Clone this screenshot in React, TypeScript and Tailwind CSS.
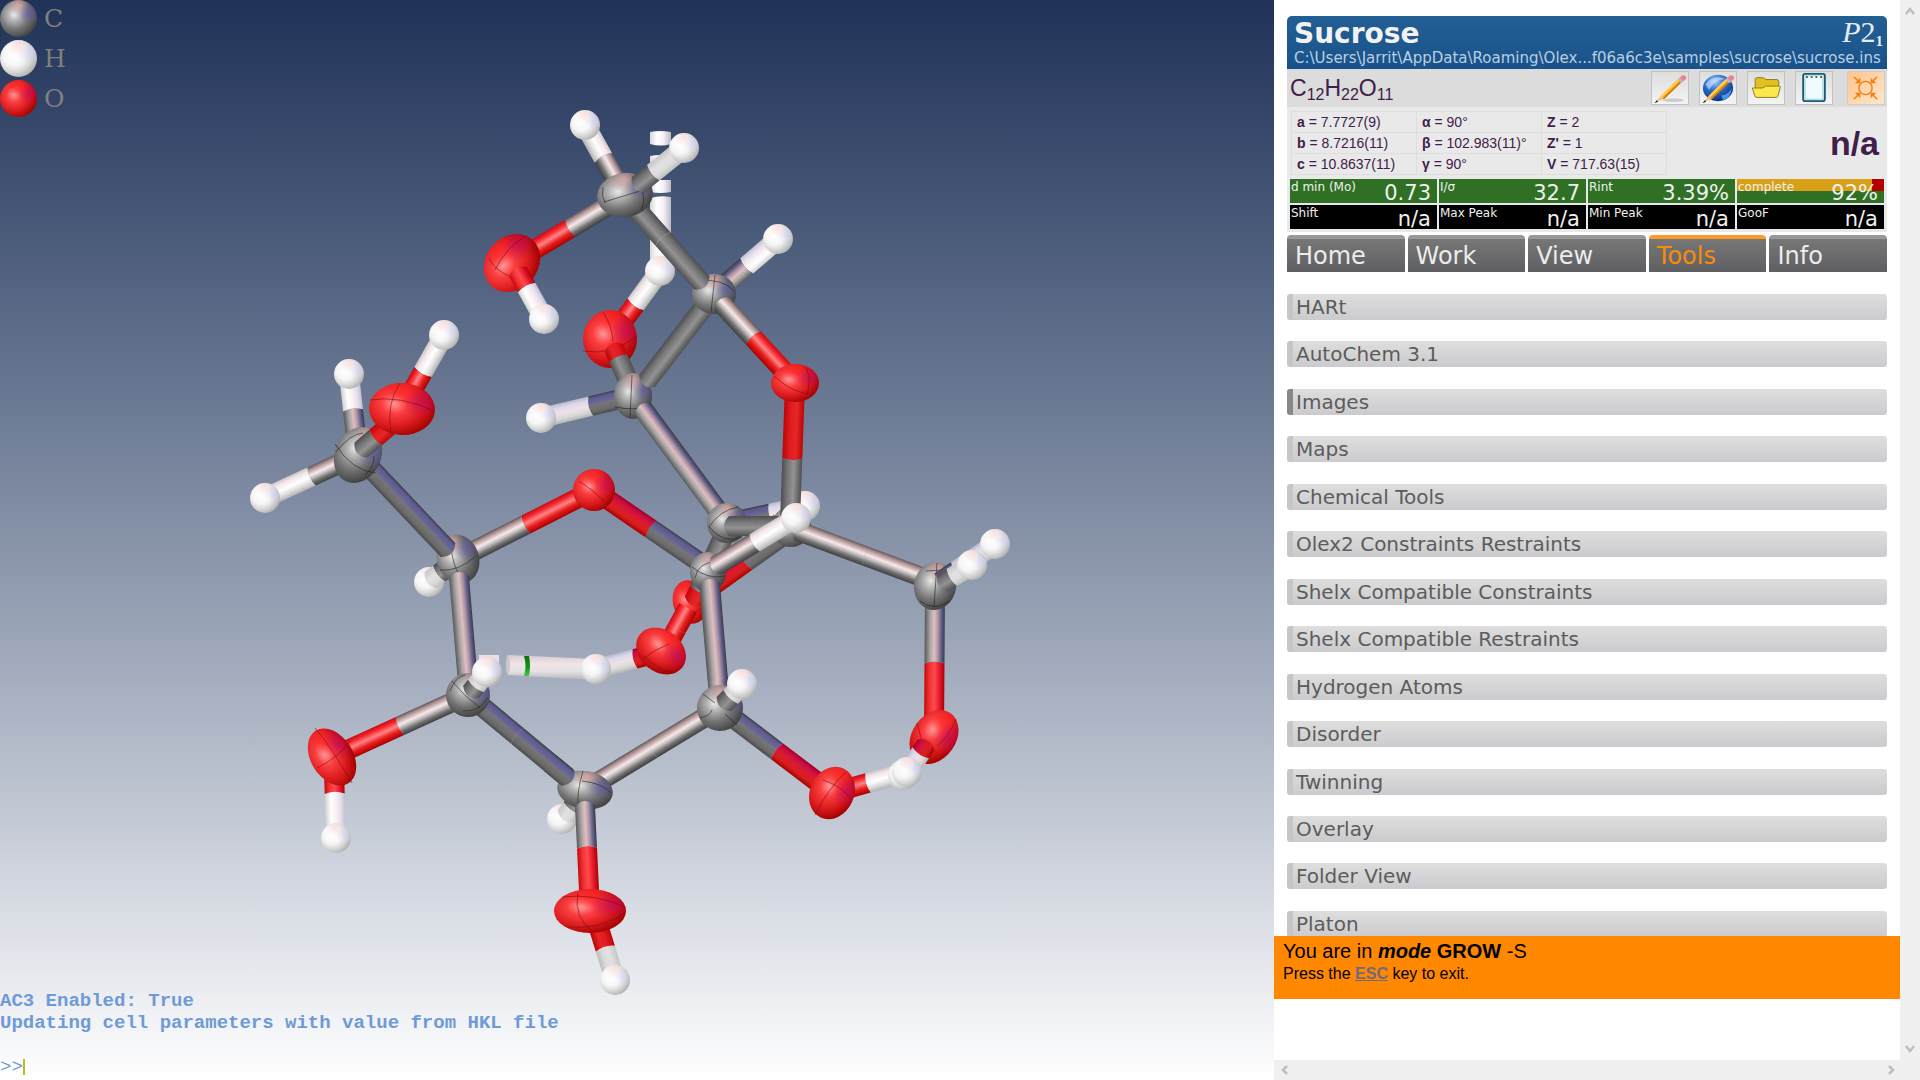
import React from "react";

type Element = "C" | "H" | "O";
type Light = "lit" | "blue" | "vert" | "flat";

type Atom = {
  kind: "atom";
  el: Element;
  x: number;
  y: number;
  rx: number;
  ry: number;
  rot: number;
  marks?: string;
};

type Bond = {
  kind: "bond";
  from: [number, number];
  split: number;
  to: [number, number];
  a: Element;
  b: Element;
  light: Light;
  cap?: "start" | "end";
};

type Raw = { kind: "raw"; node: React.ReactNode };

const atom = (el: Element, x: number, y: number, rx = 15, ry = 15, rot = 0, marks?: string): Atom => ({
  kind: "atom", el, x, y, rx, ry, rot, marks,
});

const bond = (
  x1: number, y1: number, x2: number, y2: number,
  a: Element, b: Element, split: number, light: Light, cap?: "start" | "end",
): Bond => ({ kind: "bond", from: [x1, y1], to: [x2, y2], a, b, split, light, cap });

const RAMPS: Record<string, [number, string][]> = {
  "C-lit": [[0, "#5a5557"], [0.14, "#a98b8c"], [0.42, "#f8e9ea"], [0.58, "#c4bdbd"], [0.78, "#707070"], [1, "#3d3d3d"]],
  "C-blue": [[0, "#3c3c46"], [0.14, "#5e5c8c"], [0.34, "#66639a"], [0.5, "#757578"], [0.8, "#6a6a6a"], [1, "#4a4a4a"]],
  "C-vert": [[0, "#3a3a42"], [0.18, "#66628f"], [0.34, "#b096a4"], [0.52, "#dfbfc0"], [0.72, "#aca6a6"], [0.9, "#757575"], [1, "#585858"]],
  "C-flat": [[0, "#4e4e50"], [0.3, "#77777a"], [0.6, "#939393"], [0.85, "#686868"], [1, "#505050"]],
  "O-lit": [[0, "#c80a10"], [0.2, "#f5252d"], [0.45, "#ff8585"], [0.7, "#e9201f"], [1, "#a80000"]],
  "O-blue": [[0, "#a4001c"], [0.2, "#c60d4a"], [0.45, "#dc1a2c"], [0.75, "#d71e20"], [1, "#a80000"]],
  "O-vert": [[0, "#ab0000"], [0.25, "#e51b30"], [0.5, "#ff4a4c"], [0.75, "#f03034"], [1, "#c40a0a"]],
  "O-flat": [[0, "#bd0505"], [0.35, "#e01c20"], [0.65, "#e62626"], [1, "#bb0505"]],
  "H-lit": [[0, "#c9c6c8"], [0.2, "#f3e6e8"], [0.5, "#ffffff"], [0.75, "#dedede"], [1, "#b0b0b0"]],
  "H-blue": [[0, "#b8b8c8"], [0.22, "#dcd8ee"], [0.5, "#f0e2e6"], [0.78, "#d6d6d8"], [1, "#b2b2b2"]],
  "H-vert": [[0, "#c2c0c8"], [0.22, "#e4def2"], [0.45, "#fbeff1"], [0.7, "#ffffff"], [1, "#cfcfcf"]],
  "H-flat": [[0, "#c6c6c6"], [0.4, "#e2e2e2"], [0.7, "#dcdcdc"], [1, "#bdbdbd"]],
};

const SCENE: (Atom | Bond | Raw)[] = [
  {
    kind: "raw",
    node: (
      <g fill="url(#hcol)">
        <path d="M650 132q10-2 21 0v12q-10 3-21 0z" />
        <path d="M650 156q10-2 21 0v12q-10 3-21 0z" />
        <path d="M650 180h21v12q-10 2-21 0z" />
        <path d="M650 193h21v3h-21z" fill="#4b5d75" />
        <path d="M650 198q10-3 21-1v68h-21z" />
      </g>
    ),
  },
  bond(610, 339, 660, 271, "O", "H", 0.51, "lit"),
  atom("H", 660, 271),
  bond(624, 195, 585, 125, "C", "H", 0.53, "lit"),
  atom("H", 585, 125),
  bond(626, 195, 512, 263, "C", "O", 0.49, "lit"),
  bond(714, 294, 778, 239, "C", "H", 0.51, "vert"),
  atom("H", 778, 239),
  bond(541, 418, 633, 396, "H", "C", 0.54, "blue"),
  atom("H", 541, 418),
  atom("O", 610, 339, 27, 29, 0, "M603 312Q612 325 613 342M583 351Q612 356 637 336"),
  bond(614, 348, 632, 390, "O", "C", 0.24, "flat", "start"),
  atom("C", 633, 396, 19, 23, 0, "M632 375L630 418M615 407Q634 411 652 406"),
  bond(647, 381, 714, 294, "C", "C", 0.5, "flat", "start"),
  atom("C", 714, 294, 22, 20, 0, "M715 275L711 312M700 281Q722 278 734 291"),
  bond(624, 195, 702, 283, "C", "C", 0.5, "flat", "end"),
  atom("C", 625, 195, 28, 22, -8, "M604 202L640 191M603 187Q601 196 605 203M642 191Q646 201 641 210"),
  bond(638, 185, 684, 148, "C", "H", 0.33, "flat", "start"),
  atom("H", 684, 148),
  atom("O", 512, 263, 31, 26, -50, "M489 258Q494 270 511 277M495 270Q505 249 524 237"),
  bond(518, 272, 544, 319, "O", "H", 0.33, "vert", "start"),
  atom("H", 544, 319),
  bond(722, 304, 795, 383, "C", "O", 0.43, "lit", "start"),

  bond(727, 523, 805, 506, "C", "H", 0.56, "blue"),
  atom("H", 805, 506),
  bond(690, 602, 791, 530, "O", "C", 0.56, "blue"),
  atom("C", 791, 527, 20, 20, 0, "M773 515Q790 525 809 540"),
  bond(795, 383, 790, 522, "O", "C", 0.54, "flat"),
  atom("O", 795, 383, 24, 19, 0, "M774 376Q790 391 808 394M806 368Q812 380 807 394"),
  bond(798, 531, 935, 582, "C", "C", 0.5, "lit", "start"),
  bond(643, 409, 727, 523, "C", "C", 0.5, "vert", "start"),
  atom("O", 690, 602, 17, 22, -15, "M676 611Q690 618 704 606"),
  bond(725, 533, 694, 601, "C", "O", 0.84, "flat", "end"),
  atom("C", 727, 523, 20, 20, 0, "M709 527Q720 510 738 507M709 527Q724 545 742 537"),
  bond(729, 526, 785, 526, "C", "C", 0.5, "flat", "start"),
  bond(688, 608, 666, 648, "O", "O", 0.5, "lit"),
  bond(596, 669, 661, 652, "H", "O", 0.6, "blue"),
  atom("O", 661, 651, 27, 21, 38, "M643 659Q655 649 669 644M644 656Q658 670 674 673"),
  {
    kind: "raw",
    node: (
      <g>
        <path d="M479 655h20v8h-20z" fill="#ece0e3" />
        <path d="M508 655L594 659V680L508 675q-3-10 0-20z" fill="url(#hrow)" />
        <ellipse cx="508" cy="665" rx="2" ry="10" fill="#c9c9cc" />
        <path d="M524 656h5q2 9 0 20h-5q3-10 0-20z" fill="url(#green)" />
      </g>
    ),
  },
  atom("H", 596, 669),

  bond(349, 374, 358, 455, "H", "C", 0.45, "vert"),
  atom("H", 349, 374),
  bond(265, 498, 358, 455, "H", "C", 0.5, "lit"),
  atom("H", 265, 498),
  bond(402, 409, 444, 335, "O", "H", 0.5, "lit"),
  atom("H", 444, 335),
  bond(458, 559, 594, 490, "C", "O", 0.5, "lit"),
  bond(594, 490, 708, 568, "O", "C", 0.5, "blue"),
  atom("O", 594, 490, 21, 21, 0, "M579 481Q592 489 604 501"),
  atom("H", 429, 582),
  bond(431, 580, 458, 559, "H", "C", 0.3, "flat", "start"),
  atom("C", 458, 559, 21, 25, -20, "M450 540Q452 562 458 573M440 570Q458 572 476 556"),
  bond(358, 455, 448, 550, "C", "C", 0.5, "blue", "end"),
  atom("C", 358, 455, 23, 29, 25, "M335 444Q352 471 376 473M336 452Q350 434 363 433M374 456Q374 468 365 475"),
  bond(361, 450, 402, 415, "C", "O", 0.36, "flat", "start"),
  atom("O", 402, 409, 33, 26, 3, "M370 400Q400 395 434 411M400 383Q386 403 391 434"),

  bond(459, 577, 469, 695, "C", "C", 0.5, "vert", "start"),
  bond(332, 757, 468, 695, "O", "C", 0.5, "lit"),
  bond(334, 770, 336, 838, "O", "H", 0.35, "vert"),
  atom("H", 336, 838),
  atom("O", 332, 757, 21, 31, -32, "M315 728Q330 745 352 783M317 768Q338 758 350 741"),
  bond(468, 695, 567, 777, "C", "C", 0.5, "blue"),
  atom("C", 468, 695, 22, 22, 20, "M452 681Q463 695 480 708M450 691Q455 677 465 675M463 711Q480 712 488 697"),
  bond(471, 692, 487, 672, "C", "H", 0.3, "flat", "start"),
  atom("H", 487, 672),
  atom("H", 562, 819),
  bond(566, 816, 585, 790, "H", "C", 0.3, "flat", "start"),
  bond(585, 790, 720, 708, "C", "C", 0.5, "lit"),
  atom("C", 585, 790, 28, 19, 10, "M583 771Q577 790 578 806M582 781Q602 783 611 793"),
  bond(550, 763, 568, 778, "C", "C", 0.5, "blue", "end"),
  bond(585, 806, 590, 911, "C", "O", 0.4, "vert", "start"),
  bond(598, 925, 615, 980, "O", "H", 0.43, "flat"),
  atom("H", 615, 980),
  atom("O", 590, 911, 36, 22, 0, "M578 893Q573 917 593 932M562 897Q595 893 625 907M567 927Q600 930 625 913"),

  bond(720, 708, 832, 793, "C", "O", 0.51, "blue"),
  bond(832, 793, 907, 772, "O", "H", 0.48, "lit"),
  atom("O", 832, 793, 22, 27, 25, "M815 815Q827 790 845 773M823 780Q842 786 851 799"),
  bond(708, 570, 720, 708, "C", "C", 0.5, "vert"),
  atom("C", 720, 708, 23, 23, 0, "M703 694L715 703M700 718Q710 716 712 710M725 714L737 725"),
  bond(724, 704, 743, 684, "C", "H", 0.35, "flat", "start"),
  atom("H", 742, 684),
  atom("C", 708, 572, 18, 20, 0, "M692 567Q708 580 724 576M695 578Q698 562 716 562"),
  bond(710, 584, 718, 680, "C", "C", 0.5, "vert", "start"),
  bond(716, 566, 796, 518, "C", "H", 0.48, "lit", "start"),
  atom("H", 796, 518),

  bond(935, 586, 934, 735, "C", "O", 0.52, "vert"),
  atom("C", 935, 586, 21, 24, 10, "M937 563L934 607M920 601Q935 612 949 601M926 571L944 570"),
  bond(940, 582, 995, 544, "C", "H", 0.3, "blue"),
  atom("H", 995, 544),
  bond(943, 583, 972, 565, "C", "H", 0.3, "flat", "start"),
  atom("H", 972, 565),
  atom("H", 903, 775),
  atom("O", 934, 737, 22, 29, 35, "M917 723L922 741M937 746Q948 738 956 719"),
  bond(926, 745, 905, 776, "O", "H", 0.25, "blue", "start"),
  atom("H", 907, 772),
];

function BondShape({ item }: { item: Bond }) {
  const reversed = item.to[0] < item.from[0] - 1;
  const [p, q] = reversed ? [item.to, item.from] : [item.from, item.to];
  const a = reversed ? item.b : item.a;
  const b = reversed ? item.a : item.b;
  const split = reversed ? 1 - item.split : item.split;
  const cap = item.cap && reversed ? (item.cap === "start" ? "end" : "start") : item.cap;
  const length = Math.hypot(q[0] - p[0], q[1] - p[1]);
  const angle = (Math.atan2(q[1] - p[1], q[0] - p[0]) * 180) / Math.PI;
  const mid = length * split;
  const left = cap === "start" ? `M0 -10Q-10 0 0 10` : `M0 -10L0 10`;
  const right = cap === "end" ? `Q${length + 10} 0 ${length} -10` : `L${length} -10`;
  const seam = `Q${mid - 4} 0 ${mid} -10`;
  return (
    <g transform={`translate(${p[0]} ${p[1]}) rotate(${angle})`}>
      <path d={`M${mid} -10Q${mid - 4} 0 ${mid} 10L${length} 10${right}Z`} fill={`url(#${b}-${item.light})`} />
      <path d={`${left}L${mid} 10${seam}Z`} fill={`url(#${a}-${item.light})`} />
    </g>
  );
}

function AtomShape({ item }: { item: Atom }) {
  return (
    <g>
      <g transform={`translate(${item.x} ${item.y}) rotate(${item.rot})`}>
        <ellipse rx={item.rx} ry={item.ry} fill={`url(#ball-${item.el})`} />
        <ellipse rx={item.rx} ry={item.ry} fill={`url(#warm-${item.el})`} />
        <ellipse rx={item.rx} ry={item.ry} fill={`url(#cool-${item.el})`} />
      </g>
      {item.marks && (
        <path d={item.marks} fill="none" stroke={item.el === "O" ? "#7d0c10" : "#222"} strokeWidth="1" opacity="0.6" />
      )}
    </g>
  );
}

const BALLS: Record<Element, [number, string][]> = {
  C: [[0, "#eaeaea"], [0.25, "#b4b4b4"], [0.6, "#747474"], [1, "#404040"]],
  H: [[0, "#ffffff"], [0.45, "#f6f6f6"], [0.75, "#d2d2d2"], [1, "#adadad"]],
  O: [[0, "#ff9a9a"], [0.3, "#fb3f41"], [0.65, "#dc1c1e"], [1, "#a20000"]],
};
const WARM: Record<Element, string> = { C: "#eab0b0", H: "#ffd8d8", O: "#ff2424" };
const COOL: Record<Element, string> = { C: "#5c58a8", H: "#cfcff6", O: "#c00a62" };
const ELEMENTS: Element[] = ["C", "H", "O"];

function Gradients() {
  return (
    <defs>
      {Object.entries(RAMPS).map(([id, stops]) => (
        <linearGradient key={id} id={id} gradientUnits="userSpaceOnUse" x1="0" y1="-10" x2="0" y2="10">
          {stops.map(([o, c]) => <stop key={o} offset={o} stopColor={c} />)}
        </linearGradient>
      ))}
      {ELEMENTS.map((el) => (
        <React.Fragment key={el}>
          <radialGradient id={`ball-${el}`} cx="0.38" cy="0.4" r="0.66">
            {BALLS[el].map(([o, c]) => <stop key={o} offset={o} stopColor={c} />)}
          </radialGradient>
          <radialGradient id={`warm-${el}`} cx="0.5" cy="0.14" r="0.3">
            <stop offset="0" stopColor={WARM[el]} stopOpacity="0.7" />
            <stop offset="1" stopColor={WARM[el]} stopOpacity="0" />
          </radialGradient>
          <radialGradient id={`cool-${el}`} cx="0.8" cy="0.36" r="0.3">
            <stop offset="0" stopColor={COOL[el]} stopOpacity="0.65" />
            <stop offset="1" stopColor={COOL[el]} stopOpacity="0" />
          </radialGradient>
        </React.Fragment>
      ))}
      <linearGradient id="hcol" x1="0" x2="1">
        <stop offset="0" stopColor="#d8d8dc" /><stop offset="0.35" stopColor="#fff" />
        <stop offset="0.65" stopColor="#f6eef6" /><stop offset="1" stopColor="#b9b9c4" />
      </linearGradient>
      <linearGradient id="hrow" x1="0" y1="0" x2="0" y2="1">
        <stop offset="0" stopColor="#d4cdd0" /><stop offset="0.35" stopColor="#f2e3e6" />
        <stop offset="0.65" stopColor="#e4e2e4" /><stop offset="1" stopColor="#b4b4b6" />
      </linearGradient>
      <linearGradient id="green" x1="0" y1="0" x2="0" y2="1">
        <stop offset="0" stopColor="#0a6e10" /><stop offset="0.6" stopColor="#129a1a" /><stop offset="1" stopColor="#4fc04f" />
      </linearGradient>
    </defs>
  );
}

function Molecule() {
  return (
    <svg
      viewBox="0 0 1274 1080"
      preserveAspectRatio="xMidYMid slice"
      className="h-full w-full min-h-0 [grid-area:1/1]"
      role="img"
      aria-label="Sucrose molecule"
    >
      <Gradients />
      {SCENE.map((item, i) =>
        item.kind === "atom" ? <AtomShape key={i} item={item} />
          : item.kind === "bond" ? <BondShape key={i} item={item} />
          : <g key={i}>{item.node}</g>,
      )}
    </svg>
  );
}

function Viewport() {
  return (
    <main className="grid min-w-0 flex-1 grid-cols-1 grid-rows-1 overflow-hidden bg-linear-to-b from-[#203257] to-white">
      <Molecule />
      <div className="z-10 flex flex-col justify-between pb-0.5 [grid-area:1/1]">
        <ul className="flex flex-col gap-[3px]">
          {ELEMENTS.map((el) => (
            <li key={el} className="flex h-[37px] items-center gap-[7px] font-['DejaVu_Serif',serif] text-[25px] leading-none text-[#808080]">
              <svg viewBox="-18 -18 36 36" className="size-[37px]">
                <AtomShape item={atom(el, 0, 0, 18, 18)} />
              </svg>
              {el}
            </li>
          ))}
        </ul>
        <div className="font-['Liberation_Mono',monospace] text-[19px] leading-[22px] text-[#6f9ad8]">
          <p className="font-bold">AC3 Enabled: True</p>
          <p className="font-bold">Updating cell parameters with value from HKL file</p>
          <label className="mt-[22px] flex items-center">
            <span>&gt;&gt;</span>
            <span className="h-4 w-0.5 bg-[#c0bc10]" />
            <input aria-label="Command line" className="min-w-0 flex-1 bg-transparent outline-none" />
          </label>
        </div>
      </div>
    </main>
  );
}

function Pencil() {
  return (
    <g>
      <path d="M8.500 25.500L27.500 7l3.500 3.500L12 29z" fill="#f7a51c" />
      <path d="M8.500 25.500L27.500 7l1.500 1.500L10 27z" fill="#ffd35a" />
      <path d="M11 28L30 9.500l1 1L12 29z" fill="#cf7508" />
      <path d="M8.500 25.500L3 32l9-3z" fill="#e8c48e" />
      <path d="M4.500 30L2 33l4-1.500z" fill="#222" />
      <path d="M26.500 8l2-2 4 4-2 2z" fill="#b9bcc4" />
      <path d="M28.500 6l3-2.500q3-.5 4 1.500t-.5 3L32.500 10z" fill="#ea8490" />
    </g>
  );
}

const toolIcons: { label: string; art: React.ReactNode }[] = [
  {
    label: "Edit",
    art: (
      <>
        <ellipse cx="22" cy="30" rx="11" ry="2" fill="#ccc" />
        <Pencil />
      </>
    ),
  },
  {
    label: "Edit in browser",
    art: (
      <>
        <defs>
          <radialGradient id="globe" cx="0.4" cy="0.25" r="0.8">
            <stop offset="0" stopColor="#a9cdf6" /><stop offset="0.4" stopColor="#2f74d0" /><stop offset="1" stopColor="#062a78" />
          </radialGradient>
        </defs>
        <ellipse cx="18.500" cy="17" rx="16" ry="14" fill="url(#globe)" />
        <path d="M5 13Q14 2 28 8Q16 6 9 19Z" fill="#d3e6fb" opacity="0.6" />
        <path d="M22 25Q30 24 33 17Q32 28 24 30Z" fill="#3f97ee" />
        <Pencil />
      </>
    ),
  },
  {
    label: "Open folder",
    art: (
      <>
        <path d="M7 26V8q0-2 2-2h6q2 0 3 2h12q2 0 2 2v7z" fill="#e2c01e" stroke="#8a7a20" />
        <path d="M4 17h11l3-2h15q1 0 .5 2L31 26q-.5 1-2 1H9q-2 0-2.500-2z" fill="#fce74c" stroke="#8a7a20" />
      </>
    ),
  },
  {
    label: "Notepad",
    art: (
      <>
        <rect x="7" y="2" width="23" height="29" rx="2" fill="#f1fafc" stroke="#185a70" strokeWidth="2" />
        <rect x="9" y="4" width="19" height="25" fill="none" stroke="#8ed0e2" strokeWidth="1" />
        <path d="M10 5.500h17" stroke="#555" strokeWidth="2" strokeDasharray="2 3" />
      </>
    ),
  },
];

function HeaderIcons() {
  return (
    <div className="flex items-center">
      <div className="mr-3.5 flex gap-2.5">
        {toolIcons.map((t) => (
          <button key={t.label} aria-label={t.label} className="h-[34px] w-[38px] border border-[#c2c2c2] bg-linear-to-b from-[#dedede] to-[#f4f4f4]">
            <svg viewBox="0 0 37 34" className="h-full w-full">{t.art}</svg>
          </button>
        ))}
      </div>
      <button aria-label="Center view" className="h-[34px] w-[38px] border border-[#ccc] bg-linear-to-br from-[#ffc48c] to-[#ffe6cc]">
        <svg viewBox="0 0 38 34" className="h-full w-full" fill="none" stroke="#f08010" strokeWidth="1.500">
          <circle cx="18.500" cy="17" r="7" />
          <path d="M6 5l6 6M31 5l-6 6M6 29l6-6M31 29l-6-6" />
          <path d="M13 12H7l6-6zM24 12h6l-6-6zM13 22H7l6 6zM24 22h6l-6 6z" fill="#f08010" stroke="none" />
        </svg>
      </button>
    </div>
  );
}

const cell: [string, string][][] = [
  [["a", "7.7727(9)"], ["α", "90°"], ["Z", "2"]],
  [["b", "8.7216(11)"], ["β", "102.983(11)°"], ["Z'", "1"]],
  [["c", "10.8637(11)"], ["γ", "90°"], ["V", "717.63(15)"]],
];

const stats: { label: string; value: string; tone: string }[] = [
  { label: "d min (Mo)", value: "0.73", tone: "bg-[#307024]" },
  { label: "I/σ", value: "32.7", tone: "bg-[#307024]" },
  { label: "Rint", value: "3.39%", tone: "bg-[#307024]" },
  {
    label: "complete",
    value: "92%",
    tone: "bg-[linear-gradient(to_bottom,transparent_50%,#307024_50%),linear-gradient(to_right,#d8a017_92%,#b40000_92%)]",
  },
  { label: "Shift", value: "n/a", tone: "bg-black" },
  { label: "Max Peak", value: "n/a", tone: "bg-black" },
  { label: "Min Peak", value: "n/a", tone: "bg-black" },
  { label: "GooF", value: "n/a", tone: "bg-black" },
];

function Summary() {
  return (
    <section className="overflow-hidden rounded-t-[5px] bg-[#e9e9e9]">
      <header className="flex h-[53px] flex-col bg-linear-to-b from-[#225f95] to-[#19528a] pl-[7px] pr-1 font-['DejaVu_Sans',sans-serif]">
        <div className="flex h-8 items-center justify-between">
          <h1 className="text-[28px] font-bold leading-9 text-[#f2f2f2]">
            <span className="block pt-1">Sucrose</span>
          </h1>
          <span className="flex items-baseline font-['Liberation_Serif',serif] text-[30px] leading-8 text-[#e6ecf2]">
            <i>P</i>2<sub className="bottom-[-4px] text-[15px] font-bold">1</sub>
          </span>
        </div>
        <p className="whitespace-nowrap text-[15px] leading-5 text-[#b9cfe2]">
          C:\Users\Jarrit\AppData\Roaming\Olex...f06a6c3e\samples\sucrose\sucrose.ins
        </p>
      </header>
      <div className="flex h-[38px] items-center justify-between bg-[#dcdcdc] pl-[3px] pr-0.5 font-['Liberation_Sans',sans-serif] text-[#40204a]">
        <p className="text-[23px] leading-none">
          C<sub className="text-[16px]">12</sub>H<sub className="text-[16px]">22</sub>O<sub className="text-[16px]">11</sub>
        </p>
        <HeaderIcons />
      </div>
      <div className="flex items-center justify-between px-1 py-1 font-['Liberation_Sans',sans-serif] text-[#40204a]">
        <table className="w-[376px] table-fixed border-collapse text-[14px] leading-5">
          <tbody>
            {cell.map((row, i) => (
              <tr key={i}>
                {row.map(([name, value]) => (
                  <td key={name} className="border border-[#dedede] px-[5px] whitespace-nowrap">
                    <b>{name}</b> = {value}
                  </td>
                ))}
              </tr>
            ))}
          </tbody>
        </table>
        <strong className="pr-1 text-[34px] leading-none">n/a</strong>
      </div>
      <dl className="grid grid-cols-4 gap-0.5 px-[3px] pb-[3px] font-['DejaVu_Sans',sans-serif] text-[#f0f0f0]">
        {stats.map((s) => (
          <div key={s.label} className={`flex h-6 justify-between pl-px pr-1.5 ${s.tone}`}>
            <dt className="text-[12px] leading-4">{s.label}</dt>
            <dd className="text-[21px] leading-7">{s.value}</dd>
          </div>
        ))}
      </dl>
    </section>
  );
}

const tabs = ["Home", "Work", "View", "Tools", "Info"];

function Tabs() {
  return (
    <nav className="mt-[3px] grid grid-cols-5 gap-[3px] font-['DejaVu_Sans',sans-serif]">
      {tabs.map((t) => (
        <button
          key={t}
          className={`h-[37px] rounded-t-[4px] border-t-4 bg-linear-to-b from-[#777] to-[#5f5f63] pl-2 pt-0.5 text-left text-[24px] leading-[31px] ${
            t === "Tools" ? "border-[#ff9a2a] text-[#f98b0c]" : "border-[#999] text-[#ececec]"
          }`}
        >
          {t}
        </button>
      ))}
    </nav>
  );
}

const tools = [
  "HARt", "AutoChem 3.1", "Images", "Maps", "Chemical Tools", "Olex2 Constraints Restraints",
  "Shelx Compatible Constraints", "Shelx Compatible Restraints", "Hydrogen Atoms", "Disorder",
  "Twinning", "Overlay", "Folder View", "Platon",
];

function ToolList() {
  return (
    <ul className="mt-[22px] flex min-h-0 flex-1 flex-col justify-between font-['DejaVu_Sans',sans-serif]">
      {tools.map((t) => (
        <li key={t} className="last:h-[25px]">
          <button
            className={`flex h-[26px] w-full items-center rounded-[3px] border-l-6 bg-linear-to-b from-[#dedede] to-[#cbcbce] pl-[3px] text-left text-[20px] leading-[26px] text-[#5c5c5c] ${
              t === "Images" ? "border-[#888]" : "border-[#c6c6c8]"
            }`}
          >
            {t}
          </button>
        </li>
      ))}
    </ul>
  );
}

function Chevron({ d }: { d: string }) {
  return (
    <svg viewBox="0 0 10 10" className="size-2.5" fill="none" stroke="#bdbdbd" strokeWidth="2.500">
      <path d={d} />
    </svg>
  );
}

export default function App() {
  return (
    <div className="flex h-screen overflow-hidden bg-white">
      <Viewport />
      <aside className="flex w-[646px] shrink-0 flex-col">
        <div className="flex min-h-0 flex-1">
          <div className="flex min-w-0 flex-1 flex-col pt-4">
            <div className="flex min-h-0 flex-1 flex-col px-[13px]">
              <Summary />
              <Tabs />
              <ToolList />
            </div>
            <div className="z-10 mb-[61px] h-[63px] bg-[#ff8800] px-[9px] pt-1 font-['Liberation_Sans',sans-serif] text-black">
              <p className="text-[20px] leading-[22px]">
                You are in <b><i>mode</i> GROW</b> -S
              </p>
              <p className="text-[16px] leading-6">
                Press the <a href="#esc" className="font-bold text-[#6f6a80] underline">ESC</a> key to exit.
              </p>
            </div>
          </div>
          <div className="flex w-5 flex-col items-center justify-between bg-[#f0f0f0] py-1.5">
            <button aria-label="Scroll up"><Chevron d="M1 8l4-5 4 5" /></button>
            <button aria-label="Scroll down"><Chevron d="M1 2l4 5 4-5" /></button>
          </div>
        </div>
        <div className="flex h-5 items-center justify-between bg-[#f0f0f0] pl-1.5 pr-6">
          <button aria-label="Scroll left"><Chevron d="M7 1L3 5l4 4" /></button>
          <button aria-label="Scroll right"><Chevron d="M3 1l4 4-4 4" /></button>
        </div>
      </aside>
    </div>
  );
}
